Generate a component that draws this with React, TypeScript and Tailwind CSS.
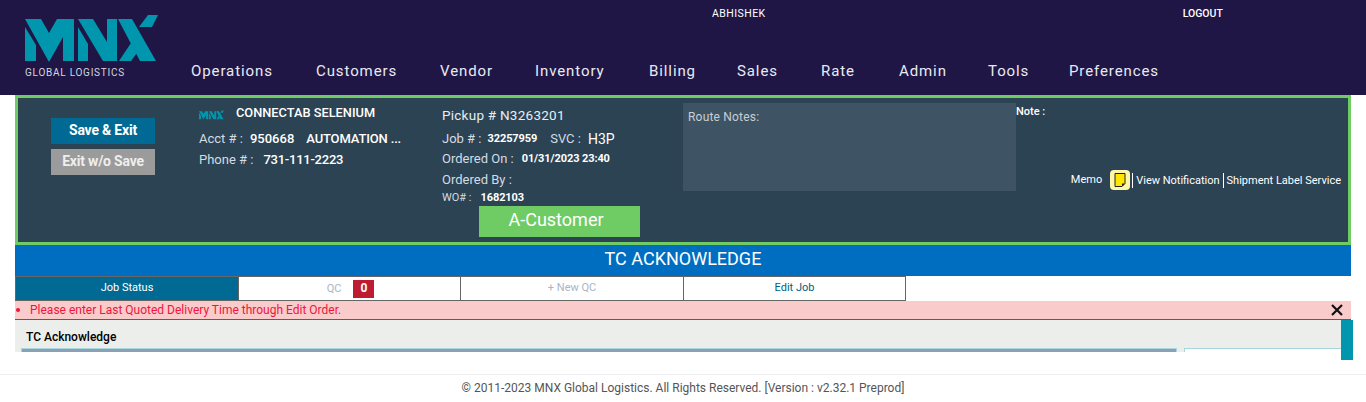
const sans = "font-['Roboto','Liberation_Sans',sans-serif]";

const navItems = [
  { label: "Operations", w: "w-[125px]" },
  { label: "Customers", w: "w-[124px]" },
  { label: "Vendor", w: "w-[95px]" },
  { label: "Inventory", w: "w-[114px]" },
  { label: "Billing", w: "w-[88px]" },
  { label: "Sales", w: "w-[84px]" },
  { label: "Rate", w: "w-[78px]" },
  { label: "Admin", w: "w-[89px]" },
  { label: "Tools", w: "w-[81px]" },
  { label: "Preferences", w: "w-auto" },
];

function Logo({ className }: { className: string }) {
  return (
    <svg viewBox="25 15 134 47" className={className} fill="#0097ae">
      <polygon points="25,27 36,45 36,61 25,61" />
      <polygon points="25,19 41,19 49,33 57,19 74,19 74,61 63,61 63,37 49,62" />
      <polygon points="78,27 88,44 88,61 78,61" />
      <polygon points="78,19 93,19 107,42 107,19 117,19 117,61 103,61" />
      <polygon points="118,19 132,19 156,61 140,61" />
      <polygon points="148,15 158,15 152,27 139,27" />
      <polygon points="119,61 131,43 137,53 131,61" />
    </svg>
  );
}

function Label({ children }: { children: React.ReactNode }) {
  return <span className="text-[#d3dce3]">{children}</span>;
}

export default function App() {
  return (
    <div className={`${sans} h-screen overflow-hidden bg-white`}>
      {/* Header */}
      <header className="h-[95px] bg-[#1f1646] flex text-white">
        <div className="w-[191px] shrink-0 pl-[25px] pt-[15px]">
          <Logo className="w-[134px] h-[47px]" />
          <div className="mt-[5px] text-[10px] leading-[12px] tracking-[0.75px] text-[#d5d5dc] whitespace-nowrap">
            GLOBAL LOGISTICS
          </div>
        </div>
        <div className="flex-1 flex flex-col">
          <div className="flex h-[61px] text-[10.5px] leading-[12px] pt-[8px]">
            <span className="ml-[521px] tracking-[0.45px]">ABHISHEK</span>
            <span className="ml-[417px] font-medium">LOGOUT</span>
          </div>
          <nav className="flex text-[15px] leading-[20px] tracking-[0.9px] text-[#e8eaf2]">
            {navItems.map((n) => (
              <a key={n.label} className={`${n.w} shrink-0`}>
                {n.label}
              </a>
            ))}
          </nav>
        </div>
      </header>

      <main className="mx-[15px] w-[1336px]">
        {/* Job panel */}
        <section className="h-[150px] border-[3px] border-[#6fcb63] bg-[#2c4354] flex text-white text-[13px]">
          <div className="ml-[33px] w-[104px] shrink-0 mt-[20px] flex flex-col gap-[5px] font-bold text-[14px]">
            <button className="h-[26px] pb-[2px] bg-[#006a94] text-white tracking-[-0.2px]">Save &amp; Exit</button>
            <button className="h-[26px] pb-[2px] bg-[#9b9b9b] text-[#eeeeee] tracking-[-0.2px]">Exit w/o Save</button>
          </div>
          <div className="ml-[44px] w-[243px] shrink-0 pt-[6px]">
            <div className="flex items-center h-[18px]">
              <Logo className="w-[25px] h-[10px] mt-[3px]" />
              <span className="ml-[12px] font-medium text-[12.8px] -mt-[1px]">CONNECTAB SELENIUM</span>
            </div>
            <div className="mt-[8px] h-[18px] leading-[18px]">
              <Label>Acct # :</Label>
              <span className="ml-[7px] font-medium">950668</span>
              <span className="ml-[12px] font-medium tracking-[-0.15px]">AUTOMATION ...</span>
            </div>
            <div className="mt-[3px] h-[18px] leading-[18px]">
              <Label>Phone # :</Label>
              <span className="ml-[10px] font-medium tracking-[-0.25px]">731-111-2223</span>
            </div>
          </div>
          <div className="w-[241px] shrink-0 pt-[7px]">
            <div className="text-[13.5px] leading-[20px] tracking-[0.25px] text-[#e6eef3]">Pickup # N3263201</div>
            <div className="mt-[5px] h-[18px] leading-[18px] flex items-center">
              <Label>Job # :</Label>
              <span className="ml-[6px] text-[11px] font-bold tracking-[-0.1px]">32257959</span>
              <span className="ml-[13px]"><Label>SVC :</Label></span>
              <span className="ml-[7px] text-[14px] -mt-[1px]">H3P</span>
            </div>
            <div className="mt-[2px] h-[18px] leading-[18px] flex items-center">
              <Label>Ordered On :</Label>
              <span className="ml-[8px] text-[11px] font-bold tracking-[-0.1px]">01/31/2023 23:40</span>
            </div>
            <div className="mt-[3px] h-[18px] leading-[18px]">
              <Label>Ordered By :</Label>
            </div>
            <div className="h-[16px] leading-[16px] flex items-center text-[11px] mt-[1px]">
              <Label>WO# :</Label>
              <span className="ml-[9px] font-bold tracking-[-0.1px]">1682103</span>
            </div>
            <div className="ml-[37px] w-[161px] h-[31px] bg-[#6fcb63] text-[18px] leading-[28px] text-center pr-[7px]">
              A-Customer
            </div>
          </div>
          <div className="w-[333px] h-[88px] mt-[5px] shrink-0 bg-[#3e5464] px-[5px] pt-[6px] text-[12px] leading-[16px] tracking-[0.2px] text-[#c6ced6]">
            Route Notes:
          </div>
          <div className="flex-1 flex flex-col pr-[7px] pt-[6px] text-[11px]">
            <div className="font-medium leading-[16px]">Note :</div>
            <div className="mt-[50px] flex items-center justify-end whitespace-nowrap">
              <span>Memo</span>
              <span className="ml-[8px] w-[20px] h-[20px] rounded-[4px] bg-[#fff7a8] flex items-center justify-center">
                <svg viewBox="0 0 12 16" className="w-[12px] h-[16px]">
                  <path d="M1 1.5h10v10l-3 3H1z" fill="#ffe600" stroke="#222" strokeWidth="1" />
                  <path d="M11 11.5H8v3z" fill="#222" />
                </svg>
              </span>
              <span className="ml-[2px] pl-[3px] border-l border-white leading-[15px]">View Notification</span>
              <span className="ml-[3px] pl-[3px] border-l border-white leading-[15px]">Shipment Label Service</span>
            </div>
          </div>
        </section>

        {/* Title */}
        <div className="h-[31px] bg-[#006ec0] text-white text-[18px] leading-[28px] text-center">
          TC ACKNOWLEDGE
        </div>

        {/* Tabs */}
        <div className="flex h-[25px] text-[11px] text-center">
          <div className="w-[224px] border border-[#666] bg-[#006a94] text-white leading-[21px]">Job Status</div>
          <div className="w-[222px] border-y border-r border-[#666] text-[#a9b4c6] flex items-center justify-center leading-[21px]">
            <span className="ml-[15px]">QC</span>
            <span className="ml-[12px] w-[21px] h-[18px] bg-[#bd1c30] text-white font-bold text-[12px] leading-[16px]">0</span>
            <span className="w-[13px]" />
          </div>
          <div className="w-[223px] border-y border-r border-[#666] text-[#a9b4c6] leading-[21px]">+ New QC</div>
          <div className="w-[222px] border-y border-r border-[#666] text-[#005f7f] leading-[21px]">Edit Job</div>
        </div>

        {/* Alert */}
        <div className="h-[19px] bg-[#f9cbcb] border-b border-[#2f7d32] flex items-center text-[12px] text-[#f0143c]">
          <span className="ml-[1px] w-[4px] h-[4px] rounded-full bg-[#f0143c]" />
          <span className="ml-[10px] flex-1">Please enter Last Quoted Delivery Time through Edit Order.</span>
          <svg viewBox="0 0 12 12" className="w-[12px] h-[12px] mr-[8px]">
            <path d="M1 1l10 10M11 1L1 11" stroke="#111" strokeWidth="2.2" />
          </svg>
        </div>

        {/* Acknowledge panel */}
        <div className="h-[32px] bg-[#eceeeb] flex flex-col relative">
          <div className="h-[28px] pl-[11px] pt-[9px] text-[12px] leading-[16px] font-medium text-black">TC Acknowledge</div>
          <div className="flex h-[4px]">
            <div className="ml-[6px] w-[1156px] bg-[#8ba0b2] border-t border-x border-[#a9d5de]" />
            <div className="ml-[7px] flex-1 bg-white border-t border-l border-[#a9d5de]" />
          </div>
          <div className="absolute left-[1326px] top-0 w-[12px] h-[40px] bg-[#0097ae]" />
        </div>
      </main>

      {/* Footer */}
      <footer className="mt-[22px] border-t border-[#eeeef2] pt-[5px] text-center text-[12px] leading-[16px] text-[#555]">
        © 2011-2023 MNX Global Logistics. All Rights Reserved. [Version : v2.32.1 Preprod]
      </footer>
    </div>
  );
}
